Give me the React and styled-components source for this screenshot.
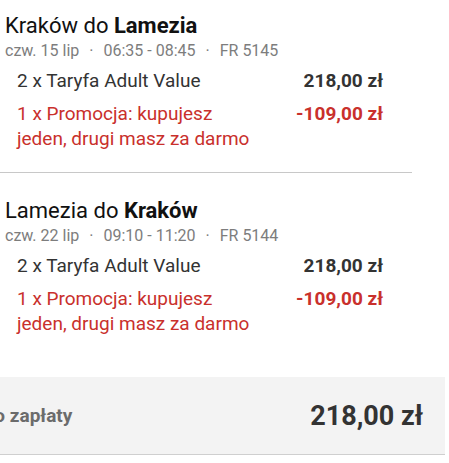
import React from 'react';
import styled, {createGlobalStyle} from 'styled-components';

const GlobalStyle = createGlobalStyle`
  body {
    margin: 0;
    background: #fff;
    font-family: Roboto, "Liberation Sans", sans-serif;
  }
`

const Page = styled.div`
  width: 445px;
  margin-top: -12px;
`
const Section = styled.div`
  width: 407px;
  padding: 25px 0 21px 5px;
  border-bottom: ${(props)=>{ return props.last ? 'none' : '1px solid #c8c8c8'}};
`
const Title = styled.div`
  font-size: 22px;
  line-height: 26px;
  color: #111;
  b { font-weight: 700; }
`
const Meta = styled.div`
  margin-top: 2px;
  font-size: 16px;
  line-height: 20px;
  color: #7d7d7d;
`
const Dot = styled.span`
  margin: 0 10px;
`
const Row = styled.div`
  display: flex;
  justify-content: space-between;
  align-items: flex-start;
  width: 366px;
  margin-left: 12px;
  margin-top: 8px;
  font-size: 19px;
  line-height: ${(props)=>{ return props.promo ? '25px' : '24px'}};
  color: ${(props)=>{ return props.promo ? '#c9302c' : '#333'}};
`
const Label = styled.div`
  flex: 0 0 242px;
`
const Price = styled.div`
  font-weight: 700;
  white-space: nowrap;
`
const Footer = styled.div`
  display: flex;
  justify-content: space-between;
  align-items: center;
  height: 77px;
  margin-top: 20px;
  padding-right: 22px;
  background: #f3f3f3;
  border-bottom: 1px solid #cfcfcf;
`
const FooterLabel = styled.div`
  margin-left: -18px;
  font-size: 19px;
  font-weight: 700;
  color: #6b6b6b;
`
const FooterPrice = styled.div`
  font-size: 27px;
  font-weight: 700;
  color: #333;
`

const flights = [
  {from: 'Kraków', to: 'Lamezia', date: 'czw. 15 lip', time: '06:35 - 08:45', code: 'FR 5145'},
  {from: 'Lamezia', to: 'Kraków', date: 'czw. 22 lip', time: '09:10 - 11:20', code: 'FR 5144'},
]

export default function App() {
  return (
    <React.Fragment>
      <GlobalStyle/>
      <Page>
        {flights.map((f, i)=>{
          return (
            <Section key={f.code} last={i === flights.length - 1}>
              <Title>{f.from} do <b>{f.to}</b></Title>
              <Meta>{f.date}<Dot>·</Dot>{f.time}<Dot>·</Dot>{f.code}</Meta>
              <Row>
                <Label>2 x Taryfa Adult Value</Label>
                <Price>218,00 zł</Price>
              </Row>
              <Row promo>
                <Label>1 x Promocja: kupujesz jeden, drugi masz za darmo</Label>
                <Price>-109,00 zł</Price>
              </Row>
            </Section>
          )
        })}
        <Footer>
          <FooterLabel>Do zapłaty</FooterLabel>
          <FooterPrice>218,00 zł</FooterPrice>
        </Footer>
      </Page>
    </React.Fragment>
  )
}
